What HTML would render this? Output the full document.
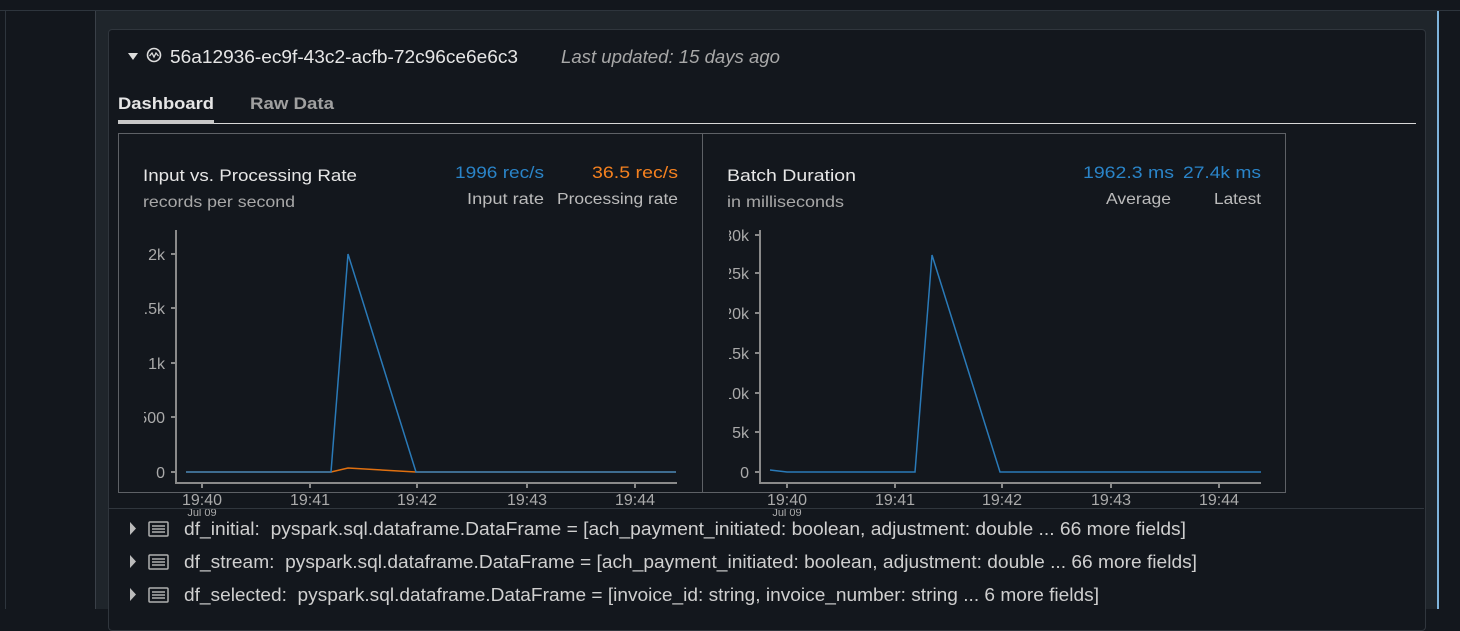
<!DOCTYPE html>
<html><head><meta charset="utf-8"><style>
html,body{margin:0;padding:0;width:1460px;height:609px;overflow:hidden;background:#13171d;font-family:"Liberation Sans",sans-serif;}
.abs{position:absolute;}
</style></head><body>
<div class="abs" style="left:0;top:0;width:1460px;height:10px;background:#13171d;border-bottom:1px solid #2e353d;"></div>
<div class="abs" style="left:5px;top:11px;width:1px;height:598px;background:#2e353d;"></div>
<div class="abs" style="left:95px;top:11px;width:1342px;height:598px;background:#1f252b;border-left:1px solid #3a4048;"></div>
<div class="abs" style="left:1437px;top:11px;width:2px;height:598px;background:#7fb4dc;"></div>
<div class="abs" style="left:108px;top:29px;width:1316px;height:600px;background:#13171d;border:1px solid #30363d;border-radius:4px;"></div>
<svg class="abs" style="left:0;top:0" width="1460" height="609" xmlns="http://www.w3.org/2000/svg" font-family="Liberation Sans, sans-serif">
 <path d="M128 53 L138 53 L133 60 Z" fill="#ddd"/>
 <circle cx="154" cy="55" r="6.5" fill="none" stroke="#ddd" stroke-width="1.6"/>
 <path d="M149.5 56 L152 53 L154 57 L156 53 L158.5 56" fill="none" stroke="#ddd" stroke-width="1.3"/>
 <text x="170" y="63" font-size="18" fill="#e6e6e6" textLength="348" lengthAdjust="spacingAndGlyphs">56a12936-ec9f-43c2-acfb-72c96ce6e6c3</text>
 <text x="561" y="63" font-size="18" fill="#a8a8a8" font-style="italic" textLength="219" lengthAdjust="spacingAndGlyphs">Last updated: 15 days ago</text>
 <text x="118" y="109" font-size="17" fill="#e6e6e6" font-weight="bold" textLength="96" lengthAdjust="spacingAndGlyphs">Dashboard</text>
 <text x="250" y="109" font-size="17" fill="#a0a0a0" font-weight="bold" textLength="84" lengthAdjust="spacingAndGlyphs">Raw Data</text>
 <rect x="118" y="123" width="1298" height="1" fill="#d8d8d8"/>
 <rect x="118" y="120" width="96" height="4" fill="#c8c8c8"/>
 <rect x="118.5" y="133.5" width="584" height="359" fill="none" stroke="#5e6166"/>
 <rect x="702.5" y="133.5" width="583" height="359" fill="none" stroke="#5e6166"/>
 <text x="143" y="181" font-size="17" fill="#e6e6e6" textLength="214" lengthAdjust="spacingAndGlyphs">Input vs. Processing Rate</text>
 <text x="143" y="207" font-size="16" fill="#a8a8a8" textLength="152" lengthAdjust="spacingAndGlyphs">records per second</text>
 <text x="455" y="178" font-size="17" fill="#2a84c8" textLength="89" lengthAdjust="spacingAndGlyphs">1996 rec/s</text>
 <text x="592" y="178" font-size="17" fill="#f5811f" textLength="86" lengthAdjust="spacingAndGlyphs">36.5 rec/s</text>
 <text x="467" y="204" font-size="16" fill="#bbb" textLength="77" lengthAdjust="spacingAndGlyphs">Input rate</text>
 <text x="557" y="204" font-size="16" fill="#bbb" textLength="121" lengthAdjust="spacingAndGlyphs">Processing rate</text>
 <g stroke="#8a8a8a" stroke-width="2" fill="none">
  <path d="M176 230 V483 H677"/>
  <path d="M171 254 H176 M171 308 H176 M171 363 H176 M171 417 H176 M171 472 H176"/>
  <path d="M202 483 V488 M310 483 V488 M417 483 V488 M527 483 V488 M635 483 V488"/>
 </g>
 <g font-size="16" fill="#aaa" text-anchor="end">
  <text x="165" y="260">2k</text><text x="165" y="314">1.5k</text><text x="165" y="369">1k</text><text x="165" y="423">500</text><text x="165" y="478">0</text>
 </g>
 <rect x="119" y="240" width="25" height="190" fill="#13171d"/>
 <g font-size="16" fill="#aaa" text-anchor="middle">
  <text x="202" y="505">19:40</text><text x="310" y="505">19:41</text><text x="417" y="505">19:42</text><text x="527" y="505">19:43</text><text x="635" y="505">19:44</text>
 </g>
 <text x="202" y="516" font-size="11" fill="#aaa" text-anchor="middle">Jul 09</text>
 <path d="M186 472 H331 L348 468 L416 472 H676" stroke="#e07010" stroke-width="1.5" fill="none"/>
 <path d="M186 472 H331 L348 254 L416 472 H676" stroke="#2a7ab8" stroke-width="1.5" fill="none"/>
 <text x="727" y="181" font-size="17" fill="#e6e6e6" textLength="129" lengthAdjust="spacingAndGlyphs">Batch Duration</text>
 <text x="727" y="207" font-size="16" fill="#a8a8a8" textLength="117" lengthAdjust="spacingAndGlyphs">in milliseconds</text>
 <text x="1083" y="178" font-size="17" fill="#2a84c8" textLength="91" lengthAdjust="spacingAndGlyphs">1962.3 ms</text>
 <text x="1183" y="178" font-size="17" fill="#2a84c8" textLength="78" lengthAdjust="spacingAndGlyphs">27.4k ms</text>
 <text x="1106" y="204" font-size="16" fill="#bbb" textLength="65" lengthAdjust="spacingAndGlyphs">Average</text>
 <text x="1214" y="204" font-size="16" fill="#bbb" textLength="47" lengthAdjust="spacingAndGlyphs">Latest</text>
 <g stroke="#8a8a8a" stroke-width="2" fill="none">
  <path d="M760 230 V483 H1261"/>
  <path d="M755 235 H760 M755 273 H760 M755 313 H760 M755 353 H760 M755 393 H760 M755 432 H760 M755 472 H760"/>
  <path d="M787 483 V488 M895 483 V488 M1002 483 V488 M1111 483 V488 M1219 483 V488"/>
 </g>
 <g font-size="16" fill="#aaa" text-anchor="end">
  <text x="749" y="241">30k</text><text x="749" y="279">25k</text><text x="749" y="319">20k</text><text x="749" y="359">15k</text><text x="749" y="399">10k</text><text x="749" y="438">5k</text><text x="749" y="478">0</text>
 </g>
 <rect x="703" y="225" width="26" height="220" fill="#13171d"/>
 <g font-size="16" fill="#aaa" text-anchor="middle">
  <text x="787" y="505">19:40</text><text x="895" y="505">19:41</text><text x="1002" y="505">19:42</text><text x="1111" y="505">19:43</text><text x="1219" y="505">19:44</text>
 </g>
 <text x="787" y="516" font-size="11" fill="#aaa" text-anchor="middle">Jul 09</text>
 <path d="M770 470 L787 472 H915 L932 255 L1000 472 H1261" stroke="#2a7ab8" stroke-width="1.5" fill="none"/>
 <rect x="109" y="508" width="1315" height="1" fill="#30363d"/>
 <g fill="#bbb">
  <path d="M130 522 L136 528.5 L130 535 Z"/>
  <path d="M130 555 L136 561.5 L130 568 Z"/>
  <path d="M130 588 L136 594.5 L130 601 Z"/>
 </g>
 <g fill="none" stroke="#b0b0b0" stroke-width="1.5">
  <rect x="149" y="522" width="19" height="14" rx="1"/>
  <path d="M152 526 H165 M152 529 H165 M152 532 H165"/>
  <rect x="149" y="555" width="19" height="14" rx="1"/>
  <path d="M152 559 H165 M152 562 H165 M152 565 H165"/>
  <rect x="149" y="588" width="19" height="14" rx="1"/>
  <path d="M152 592 H165 M152 595 H165 M152 598 H165"/>
 </g>
 <g font-size="18" fill="#cfcfcf">
  <text x="184" y="535" textLength="1002" lengthAdjust="spacingAndGlyphs" xml:space="preserve">df_initial:  pyspark.sql.dataframe.DataFrame = [ach_payment_initiated: boolean, adjustment: double ... 66 more fields]</text>
  <text x="184" y="568" textLength="1013" lengthAdjust="spacingAndGlyphs" xml:space="preserve">df_stream:  pyspark.sql.dataframe.DataFrame = [ach_payment_initiated: boolean, adjustment: double ... 66 more fields]</text>
  <text x="184" y="601" textLength="915" lengthAdjust="spacingAndGlyphs" xml:space="preserve">df_selected:  pyspark.sql.dataframe.DataFrame = [invoice_id: string, invoice_number: string ... 6 more fields]</text>
 </g>
</svg>
</body></html>
